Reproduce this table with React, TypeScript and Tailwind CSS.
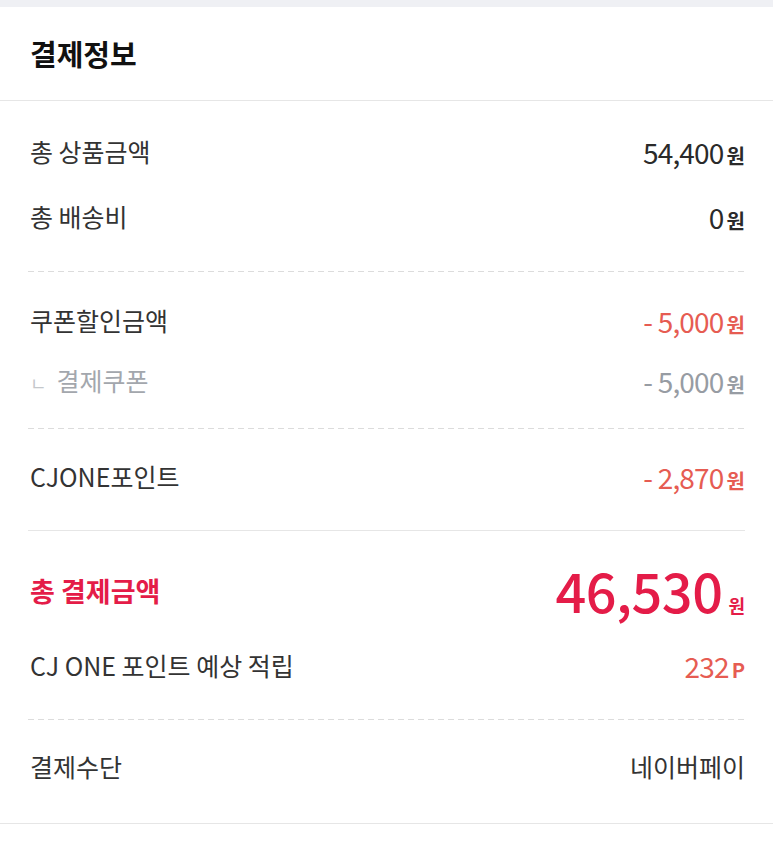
import React from "react";

const font = { fontFamily: '"Noto Sans CJK KR", "Noto Sans", sans-serif' };

const Dashed = () => (
  <div className="h-px w-full bg-[linear-gradient(to_right,#dcdcdc_60%,transparent_0)] bg-[length:10px_1px]" />
);

type AmountProps = {
  value: string;
  unit?: string;
  tone?: "dark" | "red" | "gray";
};

const Amount: React.FC<AmountProps> = ({ value, unit = "원", tone = "dark" }) => {
  const color =
    tone === "red" ? "text-[#e65c52]" : tone === "gray" ? "text-[#979ca3]" : "text-[#2a2a2a]";
  return (
    <div className={`flex items-baseline ${color}`}>
      <span className="text-[28px] font-normal tracking-[-0.8px]">{value}</span>
      <span className="ml-[3px] text-[20px] font-bold">{unit}</span>
    </div>
  );
};

const Row: React.FC<{ label: React.ReactNode; children: React.ReactNode }> = ({ label, children }) => (
  <div className="flex h-10 items-center justify-between">
    <div className="text-[25px] text-[#333333]">{label}</div>
    {children}
  </div>
);

const App: React.FC = () => {
  return (
    <div className="min-h-screen w-full bg-white" style={font}>
      <div className="h-[7px] bg-[#eff0f4]" />
      <div className="flex h-[94px] items-center border-b border-[#e6e6e6] px-[30px]">
        <h2 className="text-[29px] font-bold text-[#111111]">결제정보</h2>
      </div>

      <div className="border-b border-[#e6e6e6] pl-[28px] pr-[28px]">
        <div className="flex flex-col gap-[25px] pb-[34px] pt-[31px] pl-[2px]">
          <Row label="총 상품금액">
            <Amount value="54,400" />
          </Row>
          <Row label="총 배송비">
            <Amount value="0" />
          </Row>
        </div>
        <Dashed />

        <div className="flex flex-col gap-[20px] pb-[27px] pt-[29px] pl-[2px]">
          <Row label="쿠폰할인금액">
            <Amount value="- 5,000" tone="red" />
          </Row>
          <Row
            label={
              <span className="text-[#a3a7ad]">
                <span className="mr-[10px] text-[18px] text-[#c4c7cb]">ㄴ</span>결제쿠폰
              </span>
            }
          >
            <Amount value="- 5,000" tone="gray" />
          </Row>
        </div>
        <Dashed />

        <div className="pb-[33px] pt-[28px] pl-[2px]">
          <Row label="CJONE포인트">
            <Amount value="- 2,870" tone="red" />
          </Row>
        </div>
        <div className="h-px w-full bg-[#e6e6e6]" />

        <div className="flex flex-col gap-[25px] pb-[33px] pt-[30px] pl-[2px]">
          <div className="flex h-[60px] items-center justify-between">
            <div className="text-[27px] font-bold text-[#e41c48]">총 결제금액</div>
            <div className="flex items-baseline text-[#e41c48]">
              <span className="text-[54px] font-medium leading-none tracking-[-0.5px]">46,530</span>
              <span className="ml-[6px] text-[18px] font-bold">원</span>
            </div>
          </div>
          <Row label="CJ ONE 포인트 예상 적립">
            <div className="flex items-baseline text-[#e65c52]">
              <span className="text-[28px] font-normal tracking-[-0.8px]">232</span>
              <span className="ml-[3px] text-[20px] font-bold">P</span>
            </div>
          </Row>
        </div>
        <Dashed />

        <div className="pb-[36px] pt-[27px] pl-[2px]">
          <Row label="결제수단">
            <span className="text-[25px] text-[#333333]">네이버페이</span>
          </Row>
        </div>
      </div>
    </div>
  );
};

export default App;
